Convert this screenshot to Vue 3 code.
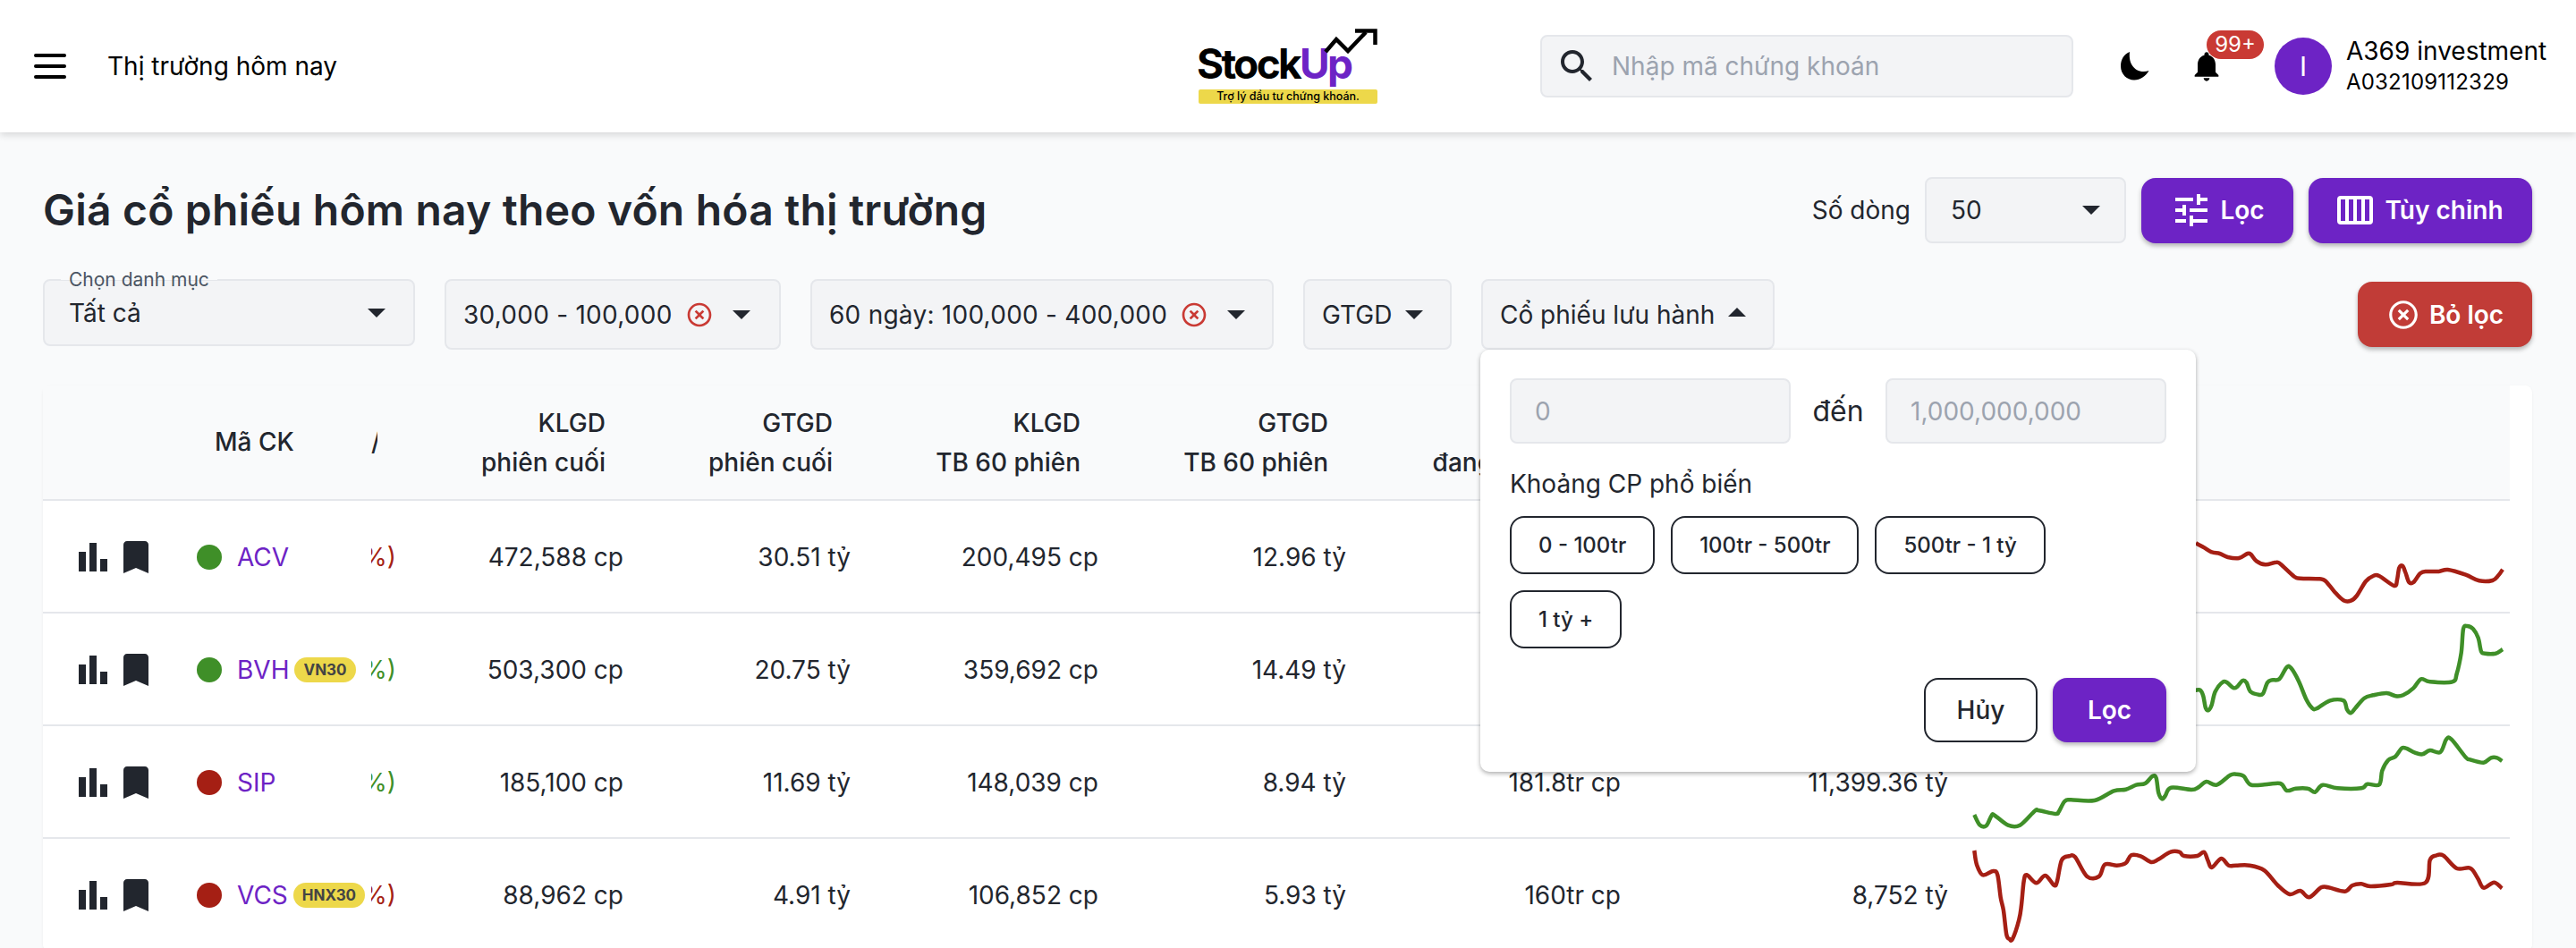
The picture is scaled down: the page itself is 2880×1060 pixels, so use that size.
<template>
  <div class="page">
    <!-- Header -->
    <header class="topbar">
      <div class="top-left">
        <div class="menu-btn"><span></span><span></span><span></span></div>
        <span class="top-title">Thị trường hôm nay</span>
      </div>

      <div class="logo">
        <div class="logo-word"><span>Stock</span><span class="logo-up">Up</span></div>
        <svg class="logo-arrow" width="60" height="32" viewBox="0 0 60 32">
          <path d="M2 26 L14 12 L27 25 L47 4" fill="none" stroke="#000" stroke-width="4.5" />
          <path d="M35 2.500 H57.500 V18" fill="none" stroke="#000" stroke-width="4.500" />
        </svg>
        <div class="logo-tag">Trợ lý đầu tư chứng khoán.</div>
      </div>

      <div class="search">
        <svg class="search-icon" width="48" height="48" viewBox="0 0 24 24">
          <path d="M15.5 14h-.79l-.28-.27C15.41 12.59 16 11.11 16 9.5 16 5.91 13.09 3 9.5 3S3 5.91 3 9.5 5.91 16 9.5 16c1.61 0 3.09-.59 4.23-1.57l.27.28v.79l5 4.99L20.49 19l-4.99-5zm-6 0C7.01 14 5 11.99 5 9.5S7.01 5 9.5 5 14 7.01 14 9.5 11.99 14 9.5 14z" />
        </svg>
        <span class="search-text">Nhập mã chứng khoán</span>
      </div>

      <svg class="moon" width="32" height="32" viewBox="0 0 32 32">
        <path d="M10 0 C3 3 0 9 0 16 C0 25 7 31.500 15 31.500 C22 31.500 28 27 31.500 21 C21 25 8 18 10 0Z" />
      </svg>

      <div class="bell">
        <svg width="40" height="40" viewBox="0 0 24 24">
          <path d="M12 22c1.100 0 2-.9 2-2h-4c0 1.100.89 2 2 2zm6-6v-5c0-3.070-1.640-5.640-4.500-6.320V4c0-.83-.67-1.500-1.500-1.500s-1.500.67-1.500 1.500v.68C7.630 5.360 6 7.920 6 11v5l-2 2v1h16v-1l-2-2z" />
        </svg>
        <span class="bell-badge">99+</span>
      </div>

      <div class="avatar">I</div>
      <div class="user">
        <div class="user-name">A369 investment</div>
        <div class="user-code">A032109112329</div>
      </div>
    </header>

    <main class="content">
      <!-- Tiêu đề -->
      <div class="title-row">
        <h1>Giá cổ phiếu hôm nay theo vốn hóa thị trường</h1>
        <div class="title-actions">
          <span class="rows-label">Số dòng</span>
          <div class="box rows-select">
            <span>50</span>
            <svg class="caret" width="20" height="10" viewBox="0 0 20 10"><path d="M0 0h20L10 10z" /></svg>
          </div>
          <button class="btn btn-filter">
            <svg width="48" height="48" viewBox="0 0 24 24" fill="#fff">
              <path d="M3 17v2h6v-2H3zM3 5v2h10V5H3zm10 16v-2h8v-2h-8v-2h-2v6h2zM7 9v2H3v2h4v2h2V9H7zm14 4v-2H11v2h10zm-6-4h2V7h4V5h-4V3h-2v6z" />
            </svg>
            Lọc
          </button>
          <button class="btn btn-custom">
            <svg width="40" height="32" viewBox="0 0 40 32" fill="none" stroke="#fff" stroke-width="4">
              <rect x="2" y="2" width="36" height="28" rx="2" />
              <path d="M11 2v28M20 2v28M29 2v28" />
            </svg>
            Tùy chỉnh
          </button>
        </div>
      </div>

      <!-- Bộ lọc -->
      <div class="filter-row">
        <div class="box filter-cat">
          <span class="legend">Chọn danh mục</span>
          <span>Tất cả</span>
          <svg class="caret" width="20" height="10" viewBox="0 0 20 10"><path d="M0 0h20L10 10z" /></svg>
        </div>
        <div class="box filter f-price f-price-a">
          <span>30,000 - 100,000</span>
          <svg class="clear" width="32" height="32" viewBox="0 0 24 24"><path :d="clearIcon" /></svg>
          <svg class="caret" width="20" height="10" viewBox="0 0 20 10"><path d="M0 0h20L10 10z" /></svg>
        </div>
        <div class="box filter f-price f-price-b">
          <span>60 ngày: 100,000 - 400,000</span>
          <svg class="clear" width="32" height="32" viewBox="0 0 24 24"><path :d="clearIcon" /></svg>
          <svg class="caret" width="20" height="10" viewBox="0 0 20 10"><path d="M0 0h20L10 10z" /></svg>
        </div>
        <div class="box filter f-value">
          <span>GTGD</span>
          <svg class="caret" width="20" height="10" viewBox="0 0 20 10"><path d="M0 0h20L10 10z" /></svg>
        </div>
        <div class="filter-wrap">
          <div class="box filter f-shares">
            <span>Cổ phiếu lưu hành</span>
            <svg class="caret caret-up" width="20" height="10" viewBox="0 0 20 10"><path d="M0 10h20L10 0z" /></svg>
          </div>

          <!-- Popup khoảng cổ phiếu -->
          <div class="popover">
            <div class="range">
              <div class="box range-input">0</div>
              <span class="range-to">đến</span>
              <div class="box range-input">1,000,000,000</div>
            </div>
            <div class="popover-label">Khoảng CP phổ biến</div>
            <div class="chips">
              <button v-for="c in chips" :key="c" class="chip">{{ c }}</button>
            </div>
            <div class="popover-actions">
              <button class="btn-cancel">Hủy</button>
              <button class="btn btn-apply">Lọc</button>
            </div>
          </div>
        </div>

        <button class="btn btn-reset">
          <svg width="38" height="38" viewBox="0 0 24 24" fill="#fff"><path :d="clearIcon" /></svg>
          Bỏ lọc
        </button>
      </div>

      <!-- Bảng -->
      <div class="table-card">
        <div class="tr thead">
          <div></div>
          <div class="th-code">Mã CK</div>
          <div class="cut th-cut">/</div>
          <div class="th">KLGD<br />phiên cuối</div>
          <div class="th">GTGD<br />phiên cuối</div>
          <div class="th">KLGD<br />TB 60 phiên</div>
          <div class="th">GTGD<br />TB 60 phiên</div>
          <div class="th">CP<br />đang lưu hành</div>
          <div></div>
          <div></div>
        </div>
        <div v-for="r in rows" :key="r.code" class="tr">
          <div class="actions">
            <svg width="48" height="48" viewBox="0 0 24 24"><path d="M4 9h4v11H4zM16 13h4v7h-4zM10 4h4v16h-4z" /></svg>
            <svg width="48" height="48" viewBox="0 0 24 24"><path d="M17 3H7c-1.100 0-1.990.9-1.990 2L5 21l7-3 7 3V5c0-1.100-.9-2-2-2z" /></svg>
          </div>
          <div class="code-cell">
            <span class="dot" :class="r.dir"></span>
            <span class="code">{{ r.code }}</span>
            <span v-if="r.badge" class="badge">{{ r.badge }}</span>
          </div>
          <div class="cut" :class="r.chg">%)</div>
          <div class="td">{{ r.vol }}</div>
          <div class="td">{{ r.val }}</div>
          <div class="td">{{ r.volAvg }}</div>
          <div class="td">{{ r.valAvg }}</div>
          <div class="td">{{ r.shares }}</div>
          <div class="td">{{ r.cap }}</div>
          <div class="spark-cell">
            <svg class="spark" width="600" height="126" viewBox="0 0 600 126">
              <path :d="r.path" fill="none" :stroke="r.chg === 'up' ? '#3f8f28' : '#a51f14'" stroke-width="4.5" stroke-linejoin="round" />
            </svg>
          </div>
        </div>
      </div>
    </main>
  </div>
</template>

<script setup>
const clearIcon =
  'M14.59 8 12 10.59 9.41 8 8 9.41 10.59 12 8 14.59 9.41 16 12 13.410 14.59 16 16 14.59 13.410 12 16 9.410 14.59 8zM12 2C6.470 2 2 6.470 2 12s4.470 10 10 10 10-4.470 10-10S17.530 2 12 2zm0 18c-4.410 0-8-3.590-8-8s3.590-8 8-8 8 3.590 8 8-3.590 8-8 8z'

const chips = ['0 - 100tr', '100tr - 500tr', '500tr - 1 tỷ', '1 tỷ +']

// Đường giá: điểm tính theo ảnh x3, đổi về toạ độ của ô rồi làm mượt
const smooth = (text, ox, oy) => {
  const p = text.trim().split(/\s+/).map((s) => {
    const [x, y] = s.split(',').map(Number)
    return [ox + x / 3, oy + y / 3]
  })
  let d = `M${p[0][0].toFixed(1)} ${p[0][1].toFixed(1)}`
  for (let i = 0; i < p.length - 1; i++) {
    const a = p[i - 1] || p[i]
    const b = p[i]
    const c = p[i + 1]
    const e = p[i + 2] || c
    const c1 = [b[0] + (c[0] - a[0]) / 6, b[1] + (c[1] - a[1]) / 6]
    const c2 = [c[0] - (e[0] - b[0]) / 6, c[1] - (e[1] - b[1]) / 6]
    d += `C${c1[0].toFixed(1)} ${c1[1].toFixed(1)} ${c2[0].toFixed(1)} ${c2[1].toFixed(1)} ${c[0].toFixed(1)} ${c[1].toFixed(1)}`
  }
  return d
}

const rows = [
  {
    code: 'ACV', dir: 'up', chg: 'down', vol: '472,588 cp', val: '30.51 tỷ', volAvg: '200,495 cp', valAvg: '12.96 tỷ', shares: '', cap: '',
    path: smooth('15,52 40,65 68,82 95,87 122,99 160,102 188,87 200,90 218,112 248,124 285,116 300,123 345,164 365,170 430,172 450,179 480,215 510,244 535,245 555,228 585,180 610,162 630,162 680,195 690,175 697,135 708,128 718,150 730,183 745,183 768,153 790,147 830,147 860,141 920,158 965,178 1010,177 1030,160 1044,140', 242, 30),
  },
  {
    code: 'BVH', badge: 'VN30', dir: 'up', chg: 'up', vol: '503,300 cp', val: '20.75 tỷ', volAvg: '359,692 cp', valAvg: '14.49 tỷ', shares: '', cap: '',
    path: smooth('15,545 30,545 40,565 48,605 58,612 68,595 80,550 105,518 120,520 140,537 152,535 172,513 185,520 198,550 225,560 240,557 255,520 270,511 295,508 320,468 335,472 360,515 385,575 405,605 420,607 465,580 510,580 522,610 535,622 550,605 580,572 610,562 655,555 685,565 710,562 745,538 770,508 800,517 875,517 890,490 905,420 912,340 925,330 945,340 962,370 972,415 985,422 1020,422 1044,408', 242, -96),
  },
  {
    code: 'SIP', dir: 'down', chg: 'up', vol: '185,100 cp', val: '11.69 tỷ', volAvg: '148,039 cp', valAvg: '8.94 tỷ', shares: '181.8tr cp', cap: '11,399.36 tỷ',
    path: smooth('22,288 40,322 62,325 80,290 90,290 135,323 175,323 225,275 240,274 295,285 305,278 325,243 345,238 425,240 490,208 530,203 565,188 595,183 620,158 632,165 640,215 652,235 662,225 682,197 750,204 775,195 800,177 835,188 880,155 900,152 925,158 948,187 995,187 1048,183 1070,207 1100,200 1140,200 1165,212 1190,188 1240,199 1320,199 1340,185 1380,187 1390,140 1410,105 1435,92 1455,65 1470,65 1500,80 1525,85 1550,72 1585,78 1605,35 1622,35 1670,95 1685,103 1730,113 1755,97 1775,97 1792,108', -8, 3),
  },
  {
    code: 'VCS', badge: 'HNX30', dir: 'down', chg: 'down', vol: '88,962 cp', val: '4.91 tỷ', volAvg: '106,852 cp', valAvg: '5.93 tỷ', shares: '160tr cp', cap: '8,752 tỷ',
    path: smooth('22,408 30,455 50,490 85,477 100,490 110,565 120,610 130,690 140,705 150,705 172,640 180,590 188,510 198,490 230,517 260,492 290,525 300,510 315,440 340,427 360,430 400,495 440,495 460,455 500,458 530,450 548,424 580,427 615,447 640,437 680,413 710,413 725,426 770,426 792,413 805,440 818,465 850,435 875,458 900,458 945,458 995,475 1040,525 1080,555 1115,543 1145,565 1185,532 1210,532 1265,545 1290,525 1320,520 1350,528 1420,522 1440,516 1535,516 1550,440 1570,425 1595,425 1640,468 1685,467 1710,500 1730,533 1765,515 1792,535', -8, -123),
  },
]
</script>

<style>
html,
body {
  margin: 0;
  overflow: hidden;
}
</style>

<style scoped>
.page {
  height: 1060px;
  overflow: hidden;
  background: #f9fafb;
  color: #22262e;
  font-family: Inter, 'Noto Sans', sans-serif;
  font-size: 28px;
}

/* Header */
.topbar {
  position: relative;
  z-index: 5;
  display: flex;
  align-items: center;
  height: 148px;
  background: #fff;
  box-shadow: 0 3px 8px rgba(0, 0, 0, 0.14);
}
.top-left {
  display: flex;
  align-items: center;
  width: 1302px;
  margin-left: 38px;
}
.menu-btn {
  display: flex;
  flex-direction: column;
  gap: 8px;
  width: 36px;
  margin-right: 46px;
}
.menu-btn span {
  height: 4px;
  border-radius: 2px;
  background: #000;
}
.top-title {
  color: #000;
}

.logo {
  position: relative;
  width: 200px;
  height: 84px;
}
.logo-word {
  position: absolute;
  left: -2px;
  top: 9px;
  font-size: 46px;
  line-height: 60px;
  font-weight: 700;
  letter-spacing: -2.7px;
  color: #000;
}
.logo-up {
  color: #6d23c5;
}
.logo-arrow {
  position: absolute;
  right: 0;
  top: 0;
}
.logo-tag {
  position: absolute;
  left: 0;
  right: 0;
  bottom: 0;
  height: 16px;
  line-height: 16px;
  border-radius: 2px;
  background: #edd84a;
  color: #000;
  font-size: 12.5px;
  font-weight: 500;
  text-align: center;
}

.search {
  display: flex;
  align-items: center;
  box-sizing: border-box;
  width: 596px;
  height: 70px;
  margin-left: 182px;
  padding-left: 15px;
  border: 2px solid #e5e7eb;
  border-radius: 8px;
  background: #f3f4f6;
}
.search-icon {
  fill: #22262e;
}
.search-text {
  margin-left: 15px;
  color: #9ca3af;
  font-size: 28px;
}
.moon {
  margin-left: 53px;
}
.bell {
  position: relative;
  width: 40px;
  height: 40px;
  margin-left: 44px;
}
.bell-badge {
  position: absolute;
  left: 20px;
  top: -20px;
  width: 64px;
  height: 32px;
  border-radius: 16px;
  background: #c93a34;
  color: #fff;
  font-size: 24px;
  line-height: 32px;
  text-align: center;
}
.avatar {
  width: 64px;
  height: 64px;
  margin-left: 56px;
  border-radius: 50%;
  background: #6d23c5;
  color: #fff;
  font-size: 30px;
  line-height: 64px;
  text-align: center;
}
.user {
  margin-left: 16px;
  color: #000;
}
.user-name {
  line-height: 36px;
}
.user-code {
  font-size: 24px;
  line-height: 34px;
  letter-spacing: 0.2px;
}

/* Nội dung */
.content {
  padding: 50px 49px 0 48px;
}
.title-row {
  display: flex;
  align-items: center;
  justify-content: space-between;
  height: 74px;
}
h1 {
  margin: -2px 0 0;
  font-size: 48px;
  font-weight: 600;
  letter-spacing: 0.2px;
}
.title-actions {
  display: flex;
  align-items: center;
}
.rows-label {
  margin-right: 16px;
}
.box {
  display: flex;
  align-items: center;
  box-sizing: border-box;
  border: 2px solid #e5e7eb;
  border-radius: 8px;
  background: #f3f4f6;
  font-size: 28px;
}
.rows-select {
  justify-content: space-between;
  width: 225px;
  height: 74px;
  margin-right: 17px;
  padding: 0 27px 0 27px;
}
.caret {
  flex: none;
  fill: #22262e;
}
.btn {
  display: inline-flex;
  align-items: center;
  justify-content: center;
  height: 73px;
  border: none;
  border-radius: 16px;
  background: #6d23c5;
  color: #fff;
  font-family: inherit;
  font-size: 28px;
  font-weight: 600;
  box-shadow: 0 3px 5px rgba(0, 0, 0, 0.28);
}
.btn-filter {
  width: 170px;
  gap: 8px;
}
.btn-custom {
  width: 250px;
  margin-left: 17px;
  gap: 13px;
}
.filter-row {
  display: flex;
  align-items: flex-start;
  margin-top: 40px;
}
.filter-cat {
  position: relative;
  justify-content: space-between;
  width: 416px;
  height: 75px;
  margin-right: 33px;
  padding: 0 31px 0 27px;
}
.legend {
  position: absolute;
  left: 18px;
  top: -14px;
  padding: 0 9px;
  background: linear-gradient(#f9fafb 50%, transparent 50%);
  color: #4b5563;
  font-size: 21px;
  line-height: 26px;
}
.filter {
  flex: none;
  height: 79px;
  padding: 0 0 0 19px;
  gap: 15px;
}
.filter-row > .filter {
  margin-right: 33px;
}
.f-price {
  gap: 17px;
  letter-spacing: 0.25px;
}
.f-price-a {
  width: 376px;
}
.f-price-b {
  width: 518px;
}
.f-value {
  width: 166px;
}
.f-shares {
  width: 328px;
}
.clear {
  fill: #c93a34;
  margin: 0 4px 0 -3px;
}
.caret-up {
  margin-top: -6px;
}
.filter-wrap {
  position: relative;
  flex: none;
}
.popover {
  position: absolute;
  z-index: 4;
  left: -1px;
  top: 79px;
  box-sizing: border-box;
  width: 800px;
  height: 472px;
  padding: 32px 33px;
  border-radius: 10px;
  background: #fff;
  box-shadow: 0 2px 5px rgba(0, 0, 0, 0.32);
}
.range {
  display: flex;
  align-items: center;
  justify-content: space-between;
}
.range-input {
  width: 314px;
  height: 73px;
  padding-left: 26px;
  color: #9ca3af;
}
.range-to {
  font-size: 32px;
}
.popover-label {
  margin-top: 28px;
  line-height: 34px;
}
.chips {
  display: flex;
  flex-wrap: wrap;
  gap: 18px;
  margin-top: 19px;
}
.chip {
  height: 65px;
  padding: 0 30px;
  border: 2px solid #22262e;
  border-radius: 16px;
  background: #fff;
  color: #22262e;
  font-family: inherit;
  font-size: 24px;
  font-weight: 500;
}
.popover-actions {
  display: flex;
  justify-content: flex-end;
  gap: 17px;
  margin-top: 33px;
}
.btn-cancel {
  width: 127px;
  height: 72px;
  border: 2px solid #22262e;
  border-radius: 16px;
  background: #fff;
  color: #22262e;
  font-family: inherit;
  font-size: 28px;
  font-weight: 500;
}
.btn-apply {
  width: 127px;
  height: 72px;
}
.btn-reset {
  width: 195px;
  margin-left: auto;
  margin-top: 3px;
  gap: 10px;
  background: #c13c37;
}

/* Bảng */
.table-card {
  margin-top: 40px;
  border-radius: 8px;
  padding-right: 25px;
  background: #fff;
  box-shadow: 0 1px 3px rgba(0, 0, 0, 0.06);
}
.tr {
  display: grid;
  grid-template-columns: 157px 210px 28px 254px 254px 277px 277px 307px 366px 629px;
  align-items: center;
  box-sizing: border-box;
  height: 126px;
  border-bottom: 2px solid #e5e7eb;
}
.thead {
  height: 129px;
  background: #f9fafb;
  font-weight: 500;
  line-height: 44px;
}
.th {
  padding-right: 20px;
  text-align: right;
  white-space: nowrap;
}
.th-code {
  padding-left: 35px;
  margin-top: -2px;
}
.cut {
  display: flex;
  justify-content: flex-end;
  overflow: hidden;
  white-space: nowrap;
}
.th-cut {
  justify-content: flex-start;
  width: 7px;
  margin-top: -2px;
}
.up {
  color: #3f8f28;
}
.down {
  color: #a51f14;
}
.actions {
  display: flex;
  padding-left: 32px;
}
.actions svg {
  fill: #22262e;
}
.code-cell {
  display: flex;
  align-items: center;
  padding-left: 15px;
}
.dot {
  flex: none;
  width: 28px;
  height: 28px;
  margin-right: 17px;
  border-radius: 50%;
}
.dot.up {
  background: #3f8f28;
}
.dot.down {
  background: #a51f14;
}
.code {
  color: #6d23c5;
}
.badge {
  margin-left: 6px;
  padding: 0 10px;
  border-radius: 14px;
  background: #edd84a;
  color: #444;
  font-size: 17px;
  font-weight: 700;
  line-height: 28px;
}
.td {
  text-align: right;
  white-space: nowrap;
}
.spark-cell {
  height: 100%;
  padding-left: 30px;
}
.spark {
  display: block;
  overflow: visible;
}
</style>
